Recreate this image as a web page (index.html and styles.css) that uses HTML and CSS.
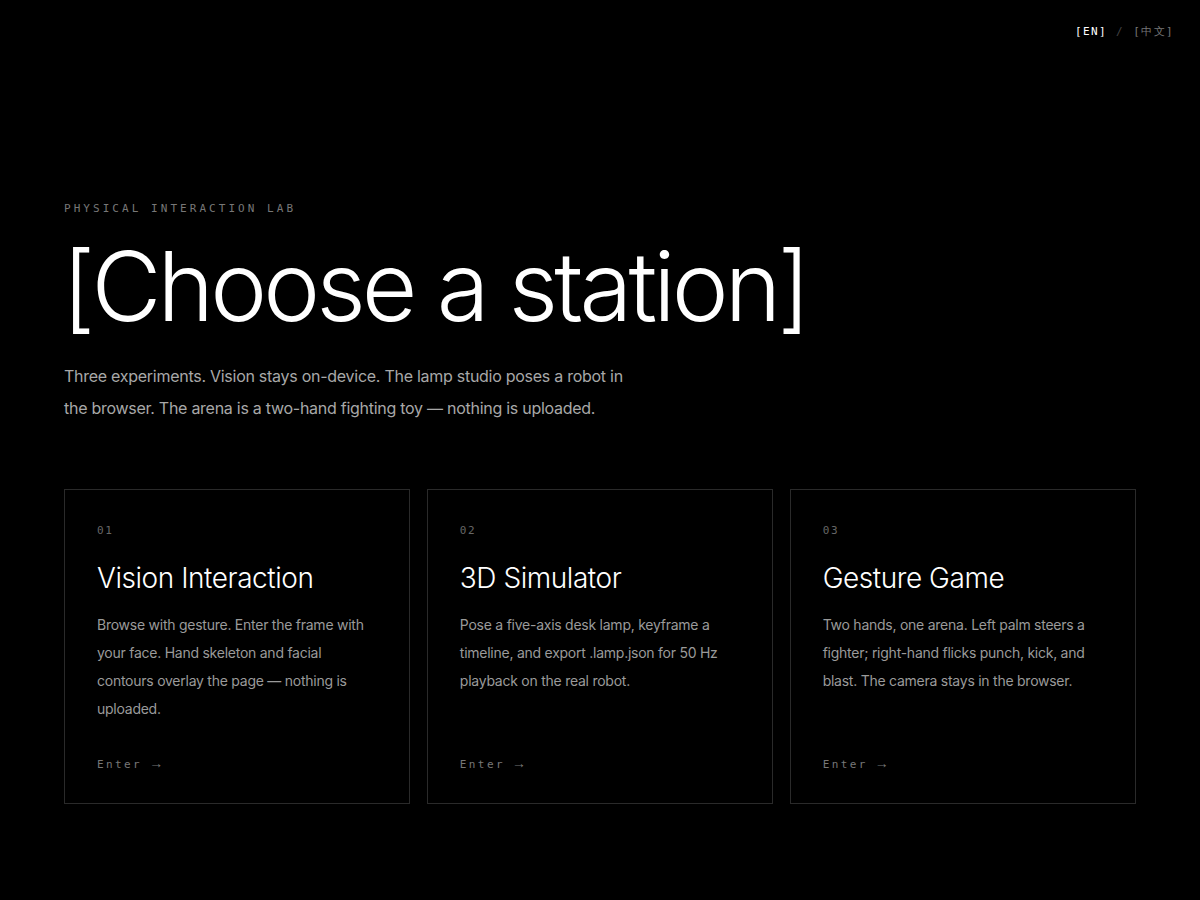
FILE: index.html
```html
<!DOCTYPE html>
<html lang="en">
<head>
<meta charset="utf-8">
<title>Choose a station</title>
<link rel="stylesheet" href="styles.css">
</head>
<body>
<header class="topbar">
  <nav class="lang">
    <span class="lang-item active">[EN]</span>
    <span class="lang-sep">/</span>
    <span class="lang-item">[中文]</span>
  </nav>
</header>
<main class="page">
  <section class="hero">
    <p class="eyebrow">PHYSICAL INTERACTION LAB</p>
    <h1 class="title">[Choose a station]</h1>
    <p class="lede">Three experiments. Vision stays on-device. The lamp studio poses a robot in the browser. The arena is a two-hand fighting toy — nothing is uploaded.</p>
  </section>
  <section class="cards">
    <article class="card">
      <span class="card-num">01</span>
      <h2 class="card-title">Vision Interaction</h2>
      <p class="card-text">Browse with gesture. Enter the frame with your face. Hand skeleton and facial contours overlay the page — nothing is uploaded.</p>
      <span class="card-link">Enter <span class="arrow">→</span></span>
    </article>
    <article class="card">
      <span class="card-num">02</span>
      <h2 class="card-title">3D Simulator</h2>
      <p class="card-text">Pose a five-axis desk lamp, keyframe a timeline, and export .lamp.json for 50 Hz playback on the real robot.</p>
      <span class="card-link">Enter <span class="arrow">→</span></span>
    </article>
    <article class="card">
      <span class="card-num">03</span>
      <h2 class="card-title">Gesture Game</h2>
      <p class="card-text">Two hands, one arena. Left palm steers a fighter; right-hand flicks punch, kick, and blast. The camera stays in the browser.</p>
      <span class="card-link">Enter <span class="arrow">→</span></span>
    </article>
  </section>
</main>
</body>
</html>
```
FILE: styles.css
```css
* { box-sizing: border-box; }
html, body { margin: 0; padding: 0; background: #000; }
body {
  width: 1200px;
  min-height: 900px;
  color: #fff;
  font-family: "Inter", "Liberation Sans", sans-serif;
}
.topbar {
  display: flex;
  justify-content: flex-end;
  padding: 25px 26px 0 0;
  height: 48px;
}
.lang {
  display: flex;
  gap: 9px;
  font-family: "DejaVu Sans Mono", monospace;
  font-size: 11px;
  letter-spacing: 1.4px;
  line-height: 14px;
}
.lang-item { color: #777; }
.lang-item.active { color: #fff; }
.lang-sep { color: #444; }
.page {
  padding: 0 64px;
}
.hero {
  padding-top: 154px;
}
.eyebrow {
  margin: 0;
  font-family: "DejaVu Sans Mono", monospace;
  font-size: 11px;
  letter-spacing: 3.05px;
  color: #777;
  line-height: 14px;
}
.title {
  margin: 14px 0 0 -2px;
  font-size: 96px;
  font-weight: 300;
  line-height: 112px;
  letter-spacing: -3.9px;
}
.lede {
  margin: 18px 0 0 0;
  max-width: 580px;
  font-size: 16px;
  line-height: 32px;
  letter-spacing: -0.27px;
  color: #a8a8a8;
}
.cards {
  margin-top: 65px;
  display: grid;
  grid-template-columns: repeat(3, 1fr);
  gap: 16.5px;
}
.card {
  border: 1px solid #2a2a2a;
  padding: 33px 32px 30px 32px;
  min-height: 315px;
  display: flex;
  flex-direction: column;
}
.card-num {
  font-family: "DejaVu Sans Mono", monospace;
  font-size: 11px;
  letter-spacing: 1.6px;
  color: #666;
  line-height: 16px;
}
.card-title {
  margin: 21px 0 0 0;
  font-size: 28px;
  font-weight: 300;
  letter-spacing: -0.45px;
  line-height: 36px;
}
.card-text {
  margin: 15px 0 0 0;
  font-size: 14px;
  line-height: 28px;
  letter-spacing: -0.25px;
  color: #9a9a9a;
}
.card-link {
  margin-top: auto;
  font-family: "DejaVu Sans Mono", monospace;
  font-size: 11px;
  letter-spacing: 2.4px;
  color: #777;
  line-height: 16px;
}
.arrow {
  font-family: "Liberation Sans", sans-serif;
  font-size: 14px;
  letter-spacing: 0;
  margin-left: -2px;
}
```
